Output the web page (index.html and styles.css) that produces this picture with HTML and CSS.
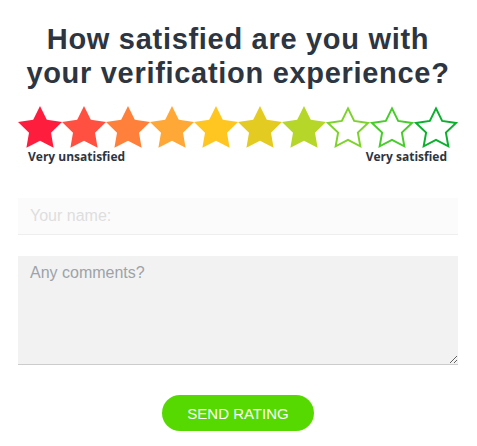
FILE: index.html
```html
<!DOCTYPE html>
<html>
<head>
<meta charset="utf-8">
<link rel="stylesheet" href="styles.css">
</head>
<body>
<div class="card">
  <h1 class="title">How satisfied are you with your verification experience?</h1>
  <div class="stars">
    <svg class="star" viewBox="2 2 20 20"><polygon fill="#ff1d3e" points="12,2 15.09,8.26 22,9.27 17,14.14 18.18,21.02 12,17.77 5.82,21.02 7,14.14 2,9.27 8.91,8.26"/></svg>
    <svg class="star" viewBox="2 2 20 20"><polygon fill="#ff5041" points="12,2 15.09,8.26 22,9.27 17,14.14 18.18,21.02 12,17.77 5.82,21.02 7,14.14 2,9.27 8.91,8.26"/></svg>
    <svg class="star" viewBox="2 2 20 20"><polygon fill="#ff803a" points="12,2 15.09,8.26 22,9.27 17,14.14 18.18,21.02 12,17.77 5.82,21.02 7,14.14 2,9.27 8.91,8.26"/></svg>
    <svg class="star" viewBox="2 2 20 20"><polygon fill="#ffa737" points="12,2 15.09,8.26 22,9.27 17,14.14 18.18,21.02 12,17.77 5.82,21.02 7,14.14 2,9.27 8.91,8.26"/></svg>
    <svg class="star" viewBox="2 2 20 20"><polygon fill="#ffc622" points="12,2 15.09,8.26 22,9.27 17,14.14 18.18,21.02 12,17.77 5.82,21.02 7,14.14 2,9.27 8.91,8.26"/></svg>
    <svg class="star" viewBox="2 2 20 20"><polygon fill="#e4cb22" points="12,2 15.09,8.26 22,9.27 17,14.14 18.18,21.02 12,17.77 5.82,21.02 7,14.14 2,9.27 8.91,8.26"/></svg>
    <svg class="star" viewBox="2 2 20 20"><polygon fill="#b6d62a" points="12,2 15.09,8.26 22,9.27 17,14.14 18.18,21.02 12,17.77 5.82,21.02 7,14.14 2,9.27 8.91,8.26"/></svg>
    <svg class="star" viewBox="2 2 20 20"><polygon fill="none" stroke="#7dd32c" stroke-width="0.9" stroke-linejoin="miter" points="12,3.1 14.8,8.8 21.1,9.7 16.5,14.1 17.6,20.3 12,17.4 6.4,20.3 7.5,14.1 2.9,9.7 9.2,8.8"/></svg>
    <svg class="star" viewBox="2 2 20 20"><polygon fill="none" stroke="#48cc2c" stroke-width="0.9" stroke-linejoin="miter" points="12,3.1 14.8,8.8 21.1,9.7 16.5,14.1 17.6,20.3 12,17.4 6.4,20.3 7.5,14.1 2.9,9.7 9.2,8.8"/></svg>
    <svg class="star" viewBox="2 2 20 20"><polygon fill="none" stroke="#0bb12d" stroke-width="0.9" stroke-linejoin="miter" points="12,3.1 14.8,8.8 21.1,9.7 16.5,14.1 17.6,20.3 12,17.4 6.4,20.3 7.5,14.1 2.9,9.7 9.2,8.8"/></svg>
  </div>
  <div class="labels">
    <span>Very unsatisfied</span>
    <span>Very satisfied</span>
  </div>
  <input class="name" type="text" placeholder="Your name:">
  <textarea class="comments" placeholder="Any comments?"></textarea>
  <div class="actions">
    <button class="send">SEND RATING</button>
  </div>
</div>
</body>
</html>
```
FILE: styles.css
```css
html, body {
  margin: 0;
  padding: 0;
  background: #ffffff;
}
.card {
  width: 440px;
  margin: 0 0 0 18px;
  padding-top: 22px;
  display: flex;
  flex-direction: column;
}
.title {
  margin: 0;
  font-family: "Liberation Sans", Arial, sans-serif;
  font-weight: bold;
  font-size: 29px;
  letter-spacing: 0.7px;
  line-height: 34px;
  color: #2d3541;
  text-align: center;
}
.stars {
  display: flex;
  margin-top: 16px;
  height: 44px;
}
.star {
  width: 44px;
  height: 44px;
  display: block;
  overflow: visible;
}
.labels {
  display: flex;
  justify-content: space-between;
  margin-top: -1px;
  padding: 0 11px 0 10px;
  font-family: "Open Sans", sans-serif;
  font-weight: bold;
  font-size: 12px;
  line-height: 16px;
  color: #2d3541;
}
.name {
  margin-top: 33px;
  height: 37px;
  box-sizing: border-box;
  border: none;
  border-bottom: 1px solid #eeeeee;
  background: #fbfbfb;
  padding: 0 12px;
  font-family: "Liberation Sans", Arial, sans-serif;
  font-size: 16px;
  outline: none;
}
.name::placeholder {
  color: #dedede;
}
.comments {
  margin-top: 21px;
  height: 109px;
  box-sizing: border-box;
  border: none;
  border-bottom: 1px solid #cccccc;
  background: #f2f2f2;
  padding: 8px 12px;
  font-family: "Liberation Sans", Arial, sans-serif;
  font-size: 16px;
  outline: none;
  resize: vertical;
}
.comments::placeholder {
  color: #9da2a8;
}
.actions {
  display: flex;
  justify-content: center;
  margin-top: 30px;
}
.send {
  width: 152px;
  height: 36px;
  border: none;
  border-radius: 18px;
  background: #55d900;
  color: #ffffff;
  font-family: "Liberation Sans", Arial, sans-serif;
  font-size: 15px;
  padding: 0;
}
```
